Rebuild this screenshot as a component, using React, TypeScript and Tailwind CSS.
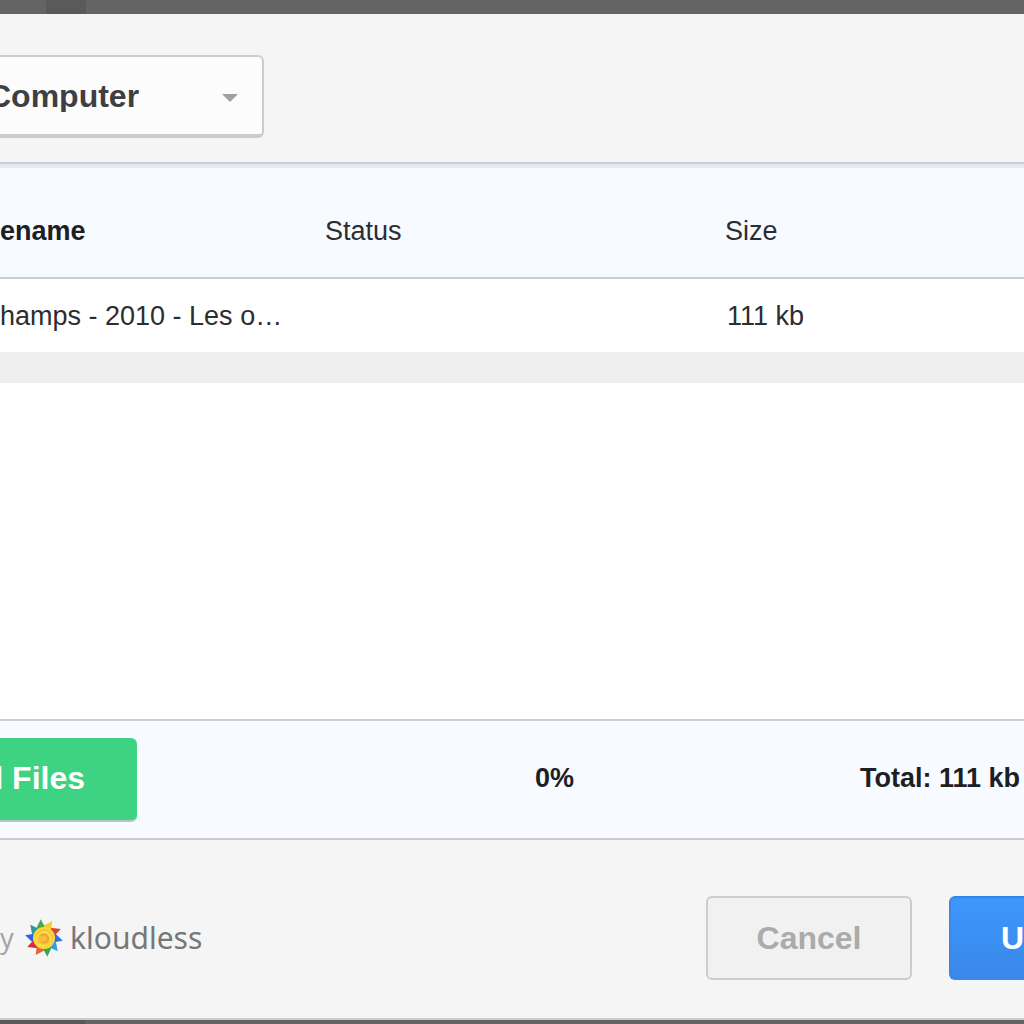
import React from 'react';

interface UploadFile {
  name: string;
  status: string;
  size: string;
}

const files: UploadFile[] = [{ name: 'hamps - 2010 - Les o…', status: '', size: '111 kb' }];

// One colour per ray, clockwise from just left of the top
const rays = [
  '#4aa84a', '#f3cf2a', '#d9442f', '#2f6fe8', '#2f9df0',
  '#3aa655', '#e8622a', '#d5303a', '#2f62e8', '#259a9a',
];

function KloudlessLogo() {
  return (
    <svg viewBox="-20 -20 40 40" className="w-10 h-10 shrink-0" aria-hidden="true">
      {rays.map((color, i) => (
        <path key={i} d="M-5 -8 L-5 -12 L0 -19 L2 -13 L6 -8 Z" fill={color} transform={`rotate(${i * 36 - 10})`} />
      ))}
      <circle r="11" fill="#fbd93a" />
      <circle r="9" fill="#f9bf35" />
      <path
        d="M-7 3 A7 7 0 1 1 6 4 M-6 6 Q0 10 6 5"
        fill="none"
        stroke="#fde04a"
        strokeWidth="2"
        strokeLinecap="round"
      />
      <path d="M-3 -2 A4 4 0 1 1 -2 4" fill="none" stroke="#f0a03a" strokeWidth="2" />
    </svg>
  );
}

function SourcePicker() {
  return (
    <div className="relative w-[264px]">
      <select
        aria-label="Source"
        defaultValue="computer"
        className="block appearance-none w-[280px] -ml-4 h-[83px] pl-0.5 rounded-md border-2 border-b-4 border-[#cccccc] bg-[#fcfcfc] text-[32px] font-bold text-[#3d4043]"
      >
        <option value="computer">Computer</option>
      </select>
      <svg viewBox="0 0 16 8" className="absolute right-[26px] top-[39px] w-4 h-2 pointer-events-none" aria-hidden="true">
        <path d="M0 0 H16 L8 8 Z" fill="#a0a0a0" />
      </svg>
    </div>
  );
}

export default function App() {
  return (
    <div className="h-screen flex flex-col overflow-hidden bg-[#646464] font-['Liberation_Sans',Arial,sans-serif] text-[27px] leading-8 text-[#2b2e31]">
      {/* dimmed page behind the dialog */}
      <div className="h-[14px] shrink-0 flex">
        <div className="w-[46px]" />
        <div className="w-10 bg-[#5a5a5a]" />
      </div>

      <main className="flex-1 min-h-0 flex flex-col bg-[#f5f5f5] border-b-2 border-[#cccccc]">
        <header className="pt-[41px] pb-6 border-b-2 border-[#c9ced2]">
          <SourcePicker />
        </header>

        <div className="shrink-0 border-t-4 border-[#e3e9ee]">
          <table className="w-full table-fixed border-separate border-spacing-0 text-left">
            <thead>
              <tr className="h-[111px] bg-[#f7fbff]">
                <th className="w-[325px] pt-4 border-b-2 border-[#c9cdd0] text-[#1d2023]">ename</th>
                <th className="w-[400px] pt-4 border-b-2 border-[#c9cdd0] font-normal">Status</th>
                <th className="pt-4 border-b-2 border-[#c9cdd0] font-normal">Size</th>
              </tr>
            </thead>
            <tbody>
              {files.map(file => (
                <tr key={file.name} className="h-[73px] bg-white">
                  <td className="whitespace-nowrap">{file.name}</td>
                  <td>{file.status}</td>
                  <td className="pl-0.5">{file.size}</td>
                </tr>
              ))}
            </tbody>
          </table>
        </div>
        <div className="h-[31px] shrink-0 bg-[#eeeeee]" />
        <div className="flex-1 bg-white" />

        <div className="h-[121px] shrink-0 grid grid-cols-[1fr_36px_1fr] items-center bg-[#f7fbff] border-y-2 border-[#cccccc] font-bold text-[#1d2023]">
          <button className="w-[137px] h-[84px] pr-[52px] pb-0.5 flex items-center justify-end rounded-r-md bg-[#3dd382] border-b-2 border-[#b9c4c0] text-[32px] text-white">
            <span className="whitespace-nowrap">d Files</span>
          </button>
          <span className="pl-[41px] pb-1 whitespace-nowrap">0%</span>
          <span className="pr-1 pb-1 text-right">Total: 111 kb</span>
        </div>

        <footer className="h-[178px] shrink-0 flex items-center justify-between pt-[18px]">
          <div className="flex items-center">
            <span className="w-6 text-[27px] text-[#a5a5a5] font-['Noto_Sans',sans-serif]">y</span>
            <KloudlessLogo />
            <span className="ml-[6px] text-[30px] text-[#75787b] font-['Noto_Sans',sans-serif]">kloudless</span>
          </div>
          <div className="flex gap-[37px] text-[32px] font-bold">
            <button className="w-[206px] h-[84px] rounded-md border-2 border-[#cccccc] bg-[#f1f1f1] text-[#ababab]">
              Cancel
            </button>
            <button className="w-[75px] h-[84px] pl-[50px] text-left rounded-l-md border-2 border-r-0 border-[#3d86e6] border-t-[#3585e8] bg-linear-to-b from-[#3d97fb] to-[#3a88ea] text-white">
              U
            </button>
          </div>
        </footer>
      </main>

      <div className="h-1 shrink-0 flex">
        <div className="w-[85px] bg-[#5a5a5a]" />
      </div>
    </div>
  );
}
